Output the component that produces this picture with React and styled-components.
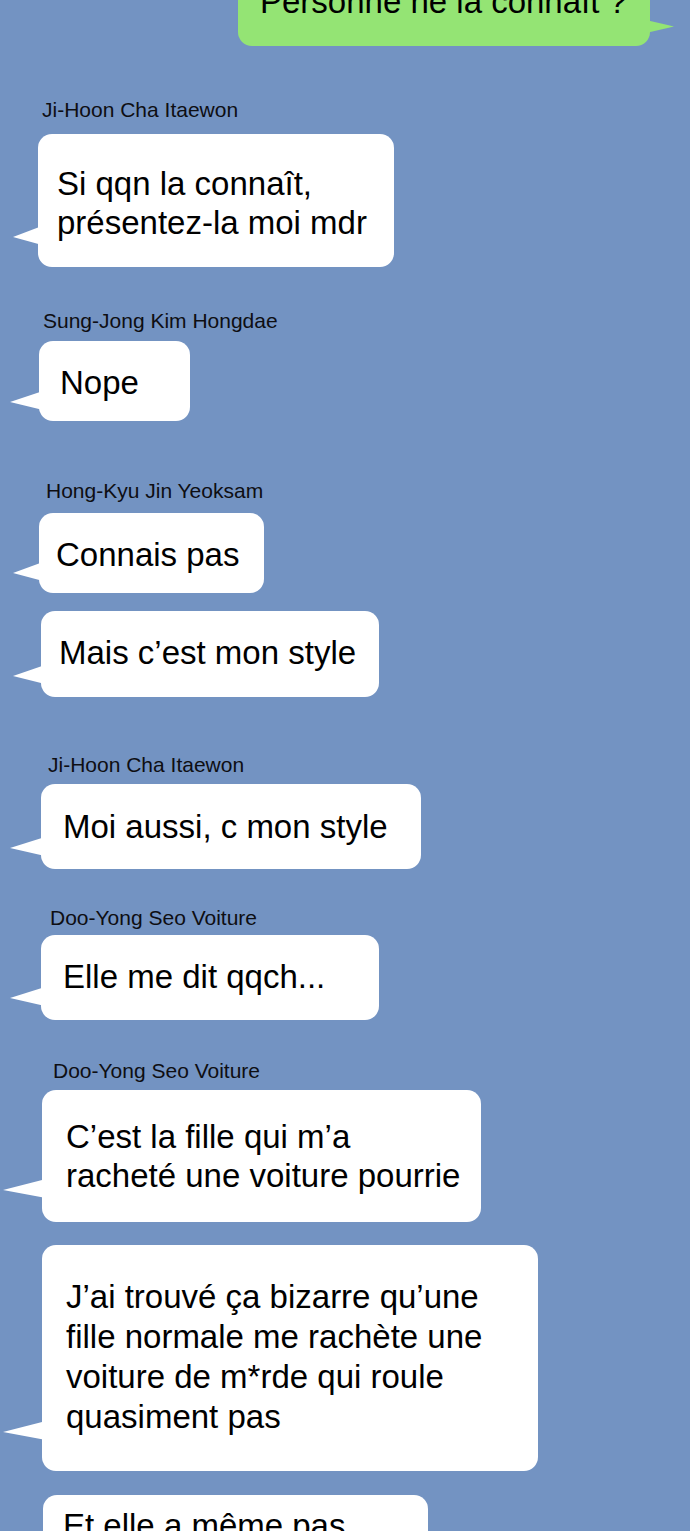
import React from "react";
import styled, { createGlobalStyle } from "styled-components";

const GlobalStyle = createGlobalStyle`
  html, body {
    margin: 0;
    padding: 0;
    background: #7393c2;
  }
  body {
    font-family: "Liberation Sans", Arial, Helvetica, sans-serif;
  }
`;

//Whole chat screen
const Screen = styled.div`
  width: 690px;
  height: 1531px;
  overflow: hidden;
  background: #7393c2;
`;

//Column that holds every message
const Thread = styled.div`
  display: flex;
  flex-direction: column;
  align-items: flex-start;
`;

//Own message, green, on the right
const Outgoing = styled.div`
  position: relative;
  box-sizing: border-box;
  margin-top: -44px;
  margin-left: 238px;
  width: 412px;
  height: 90px;
  padding: 26px 0 0 22px;
  background: #94e474;
  border-radius: 14px;

  &::after {
    content: "";
    position: absolute;
    right: -24px;
    bottom: 13px;
    width: 28px;
    height: 13px;
    background: #94e474;
    clip-path: polygon(0 0, 100% 50%, 0 100%);
  }
`;

//Sender name above the bubbles
const SenderName = styled.div`
  margin-top: ${(p) => p.$mt}px;
  margin-left: ${(p) => p.$x}px;
  height: 24px;
  font-size: 21px;
  line-height: 24px;
  color: #0e0e12;
  white-space: nowrap;
`;

//White received bubble with its tail
const Bubble = styled.div`
  position: relative;
  box-sizing: border-box;
  margin-top: ${(p) => p.$mt}px;
  margin-left: ${(p) => p.$x}px;
  width: ${(p) => p.$w}px;
  height: ${(p) => p.$h}px;
  padding-top: ${(p) => p.$pt}px;
  padding-left: ${(p) => p.$pl}px;
  background: #ffffff;
  border-radius: 14px;

  &::before {
    content: "";
    position: absolute;
    left: ${(p) => -p.$tail}px;
    bottom: ${(p) => p.$tb - 8}px;
    width: ${(p) => p.$tail + 4}px;
    height: 19px;
    background: #ffffff;
    clip-path: polygon(100% 0, 0 58%, 100% 100%);
  }
`;

const MessageText = styled.div`
  font-size: 33px;
  line-height: ${(p) => p.$lh || 39}px;
  color: #000;
  white-space: nowrap;
`;

const thread = [
  { name: "Ji-Hoon Cha Itaewon", nx: 42, nmt: 52 },
  { x: 38, w: 356, h: 133, mt: 12, pt: 30, pl: 19, tail: 25, tb: 30, lines: ["Si qqn la connaît,", "présentez-la moi mdr"] },
  { name: "Sung-Jong Kim Hongdae", nx: 43, nmt: 42 },
  { x: 39, w: 151, h: 80, mt: 8, pt: 22, pl: 21, tail: 29, tb: 19, lines: ["Nope"] },
  { name: "Hong-Kyu Jin Yeoksam", nx: 46, nmt: 58 },
  { x: 39, w: 225, h: 80, mt: 10, pt: 22, pl: 17, tail: 26, tb: 20, lines: ["Connais pas"] },
  { x: 41, w: 338, h: 86, mt: 18, pt: 22, pl: 18, tail: 28, tb: 21, lines: ["Mais c’est mon style"] },
  { name: "Ji-Hoon Cha Itaewon", nx: 48, nmt: 56 },
  { x: 41, w: 380, h: 85, mt: 7, pt: 23, pl: 22, tail: 31, tb: 21, lines: ["Moi aussi, c mon style"] },
  { name: "Doo-Yong Seo Voiture", nx: 50, nmt: 37 },
  { x: 41, w: 338, h: 85, mt: 5, pt: 22, pl: 22, tail: 31, tb: 22, lines: ["Elle me dit qqch..."] },
  { name: "Doo-Yong Seo Voiture", nx: 53, nmt: 39 },
  { x: 42, w: 439, h: 132, mt: 7, pt: 27, pl: 24, tail: 39, tb: 32, lines: ["C’est la fille qui m’a", "racheté une voiture pourrie"] },
  { x: 42, w: 496, h: 226, mt: 23, pt: 32, pl: 24, tail: 39, tb: 39, lh: 40, lines: ["J’ai trouvé ça bizarre qu’une", "fille normale me rachète une", "voiture de m*rde qui roule", "quasiment pas"] },
  { x: 43, w: 385, h: 120, mt: 24, pt: 11, pl: 20, tail: 30, tb: 30, lines: ["Et elle a même pas"] },
];

export default function App() {
  return (
    <>
      <GlobalStyle />
      <Screen>
        <Thread>
          <Outgoing>
            <MessageText>Personne ne la connaît ?</MessageText>
          </Outgoing>
          {thread.map((item, i) =>
            item.name ? (
              <SenderName key={i} $x={item.nx} $mt={item.nmt}>
                {item.name}
              </SenderName>
            ) : (
              <Bubble
                key={i}
                $x={item.x}
                $w={item.w}
                $h={item.h}
                $mt={item.mt}
                $pt={item.pt}
                $pl={item.pl}
                $tail={item.tail}
                $tb={item.tb}
              >
                {item.lines.map((line, j) => (
                  <MessageText key={j} $lh={item.lh}>
                    {line}
                  </MessageText>
                ))}
              </Bubble>
            )
          )}
        </Thread>
      </Screen>
    </>
  );
}
